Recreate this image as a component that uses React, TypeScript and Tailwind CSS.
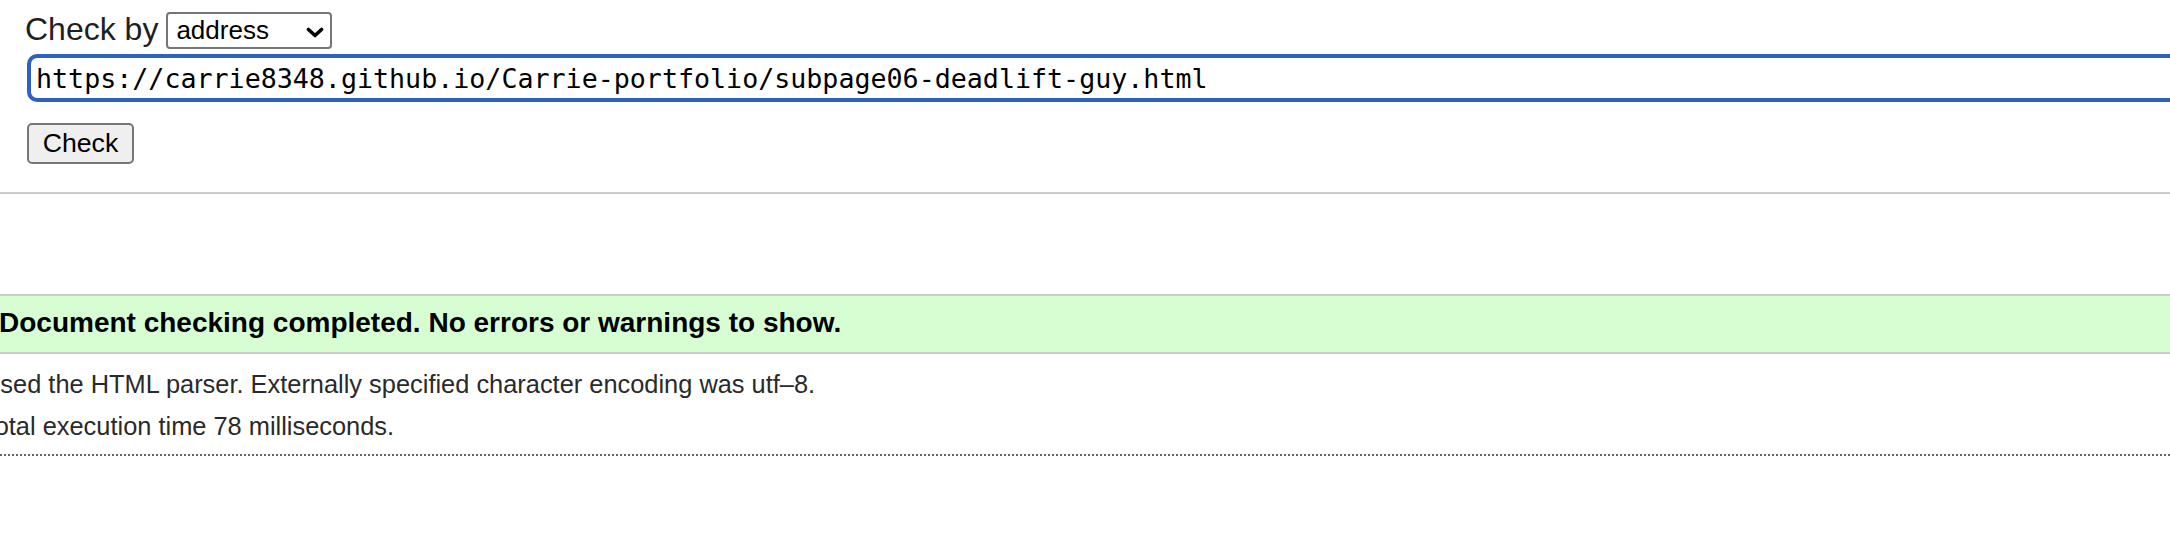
import React from 'react';

const URL = 'https://carrie8348.github.io/Carrie-portfolio/subpage06-deadlift-guy.html';

export default function App() {
  return (
    <div className="w-full h-[556px] overflow-hidden bg-white text-black font-['Liberation_Sans',Arial,sans-serif]">
      {/* Check form */}
      <form className="pl-[27px] pt-[12px]" onSubmit={(e) => e.preventDefault()}>
        <div className="flex items-start gap-[8px] h-[37px]">
          <span className="-ml-[2px] text-[32px] leading-[35px] text-[#1f1f1f]">Check by</span>
          <div className="flex items-center justify-between w-[166px] h-[37px] border-2 border-[#767676] rounded-[4px] pl-[8px] pr-[6px] text-[26px]">
            <span>address</span>
            <svg width="18" height="11" viewBox="0 0 18 11" className="mt-[4px]">
              <polyline
                points="2.5,2.5 9,8.5 15.5,2.5"
                fill="none"
                stroke="#000"
                strokeWidth="3.6"
                strokeLinecap="round"
                strokeLinejoin="round"
              />
            </svg>
          </div>
        </div>
        <input
          readOnly
          value={URL}
          className="block mt-[5px] w-[2300px] h-[48px] border-4 border-[#2b61c9] rounded-[10px] pl-[5px] bg-white font-['DejaVu_Sans_Mono',monospace] text-[26.67px] leading-[40px] text-black outline-none"
        />
        <div className="pt-[21px] pb-[28px]">
          <button
            type="submit"
            className="flex items-center justify-center w-[107px] h-[41px] bg-[#efefef] border-2 border-[#767676] rounded-[5px] text-[26.67px] leading-none text-black"
          >
            Check
          </button>
        </div>
      </form>

      <div className="h-[2px] bg-[#cccccc]" />

      {/* Result */}
      <div className="mt-[100px] border-y-2 border-[#cccccc] bg-[#d7fed2]">
        <h2 className="-ml-[1px] pt-[11px] pb-[13px] text-[28px] leading-[32px] font-bold whitespace-nowrap">
          Document checking completed. No errors or warnings to show.
        </h2>
      </div>

      <div className="mt-[9px] -ml-[18px] text-[25.4px] leading-[42px] text-[#2a2a2a] whitespace-nowrap">
        <p>Used the HTML parser. Externally specified character encoding was utf–8.</p>
        <p>Total execution time 78 milliseconds.</p>
      </div>

      <div className="mt-[7px] border-t-2 border-dotted border-[#666666]" />
    </div>
  );
}
